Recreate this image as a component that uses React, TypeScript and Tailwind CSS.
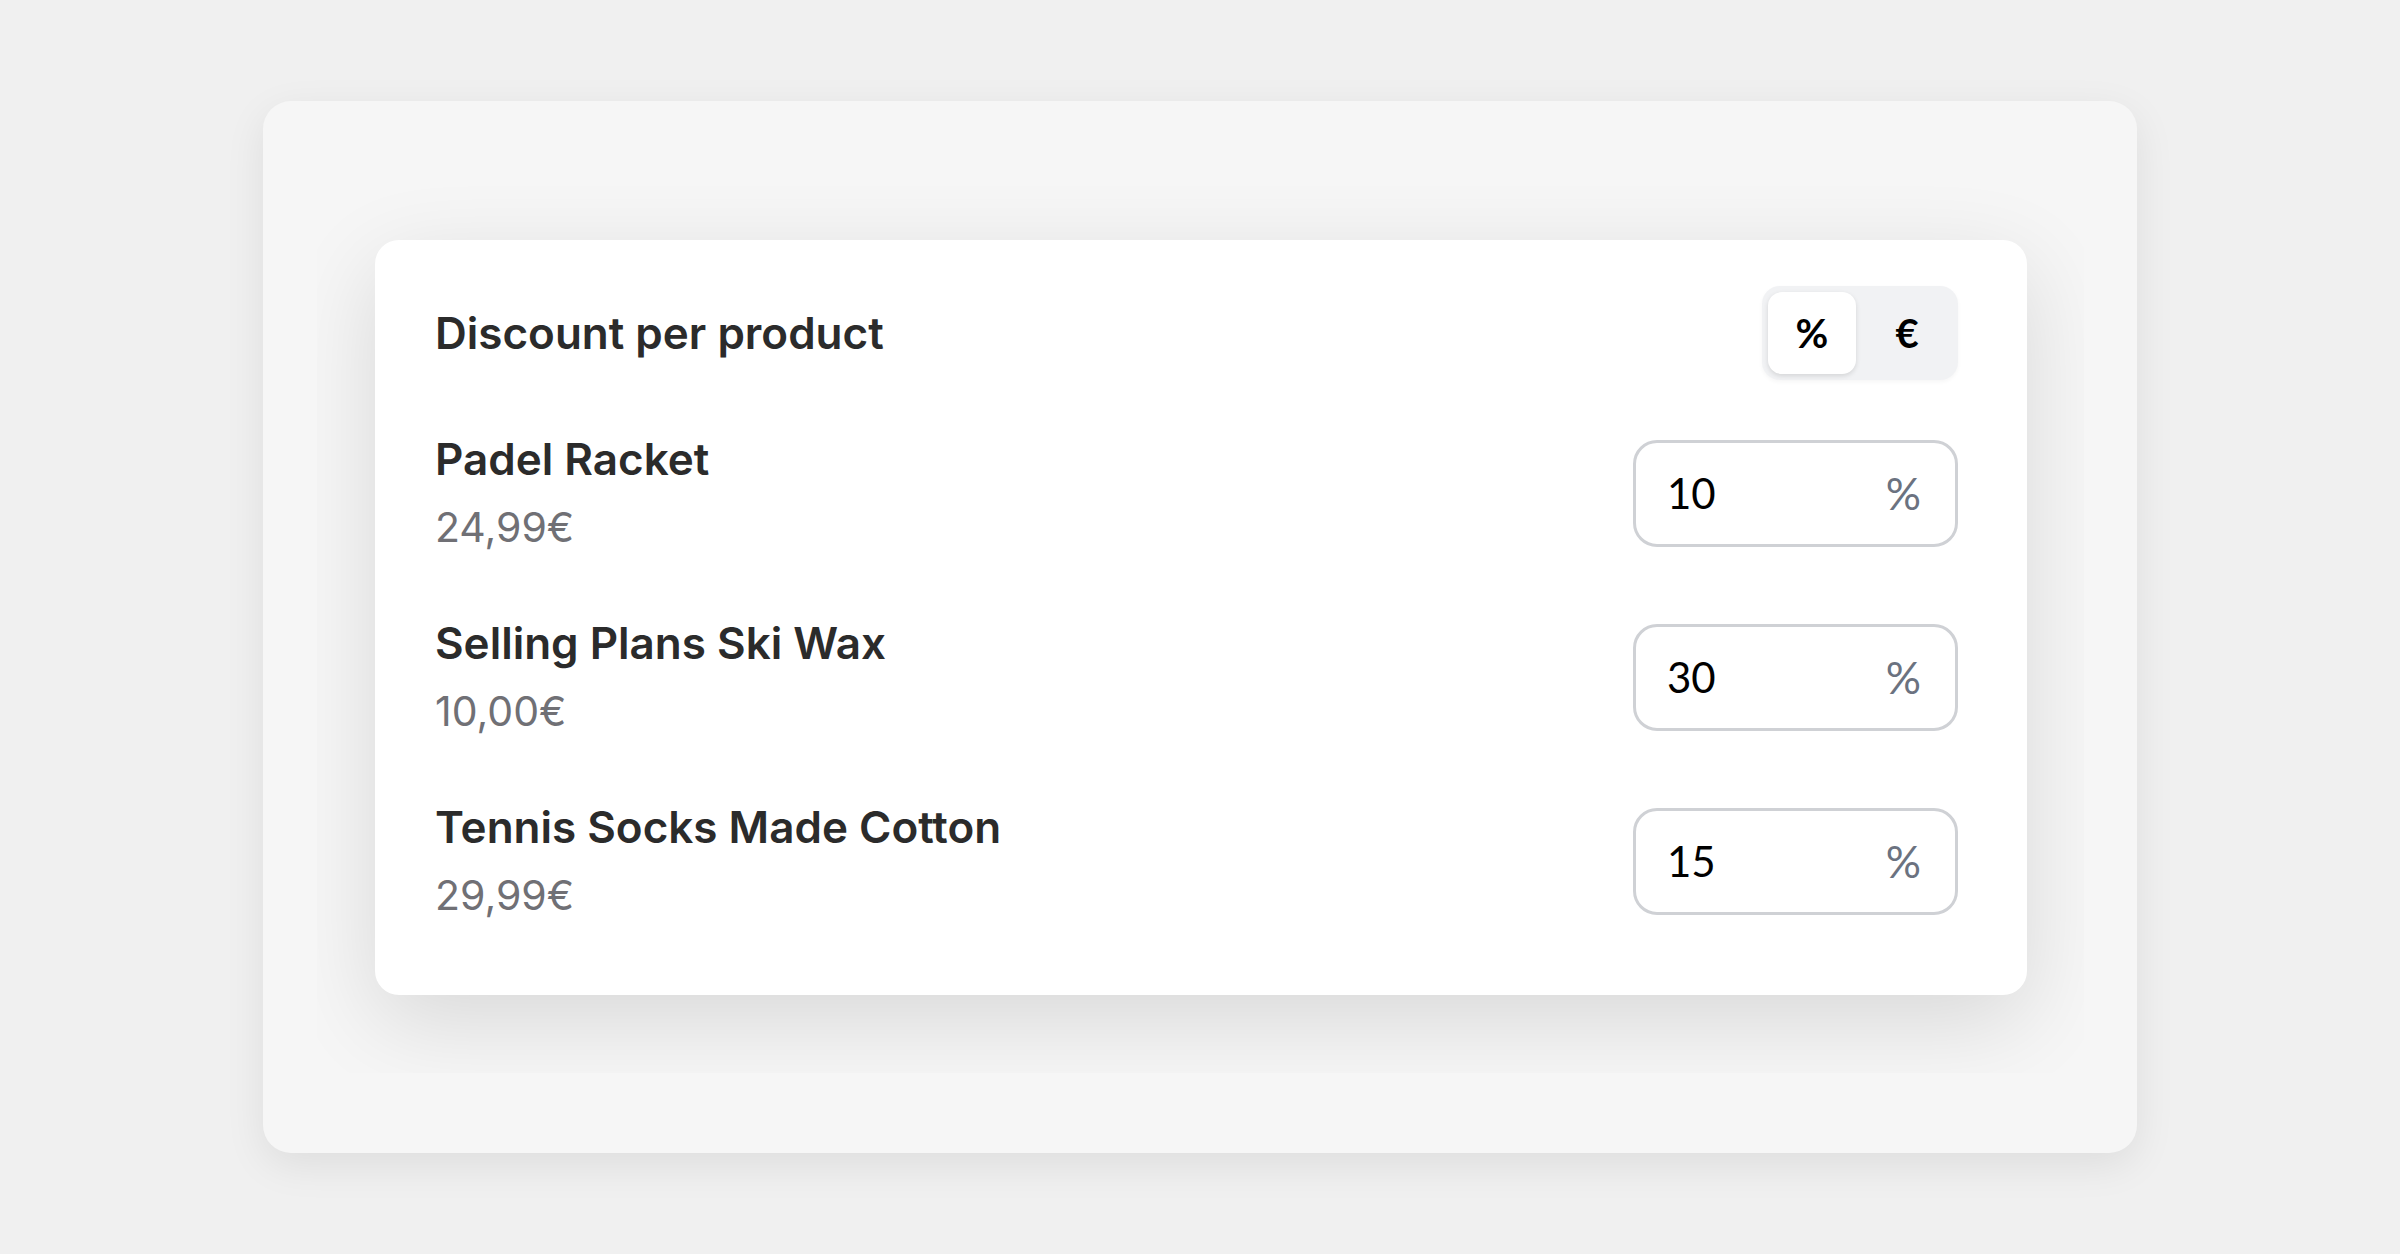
import React from "react";

const products = [
  { name: "Padel Racket", price: "24,99€", value: "10" },
  { name: "Selling Plans Ski Wax", price: "10,00€", value: "30" },
  { name: "Tennis Socks Made Cotton", price: "29,99€", value: "15" },
];

export default function App() {
  return (
    <div className="w-[2400px] h-[1254px] bg-[#f0f0f0] flex items-center justify-center font-['Inter',sans-serif]">
      <div className="w-[1874px] h-[1052px] bg-[#f6f6f6] rounded-[28px] shadow-[0_12px_40px_rgba(0,0,0,0.08)] pt-[80px] pl-[54px]">
        <div className="w-[1767px] h-[892px] overflow-hidden pl-[58px] pt-[59px]">
          <div className="w-[1652px] h-[755px] bg-white rounded-[24px] shadow-[0_26px_90px_rgba(0,0,0,0.12)] pt-[46px] pl-[60px] pr-[69px]">
            <div className="flex items-center justify-between h-[94px]">
              <div className="text-[44px] font-semibold text-[#2b2b2b]">Discount per product</div>
              <div className="w-[196px] h-[94px] bg-[#f1f2f4] rounded-[18px] p-[6px] flex items-center shadow-[0_2px_4px_rgba(0,0,0,0.04)]">
                <div className="w-[88px] h-[82px] bg-white rounded-[14px] shadow-[0_2px_5px_rgba(0,0,0,0.12)] flex items-center justify-center text-[40px] font-bold text-black font-['Lato',sans-serif]">%</div>
                <div className="flex-1 h-[82px] flex items-center justify-center pl-[6px] text-[40px] font-bold text-black font-['Lato',sans-serif]">€</div>
              </div>
            </div>
            <div className="mt-[49px] flex flex-col gap-[56px]">
              {products.map((p) => (
                <div key={p.name} className="flex items-center justify-between h-[128px]">
                  <div className="flex flex-col">
                    <div className="text-[44px] leading-[60px] font-semibold text-[#2b2b2b]">{p.name}</div>
                    <div className="text-[41px] leading-[60px] mt-[8px] text-[#707075]">{p.price}</div>
                  </div>
                  <div className="w-[325px] h-[107px] border-[3px] border-[#cfd1d5] rounded-[24px] flex items-center justify-between pl-[31px] pr-[34px] font-['Lato',sans-serif]">
                    <span className="text-[42px] text-black">{p.value}</span>
                    <span className="text-[44px] text-[#6b7280]">%</span>
                  </div>
                </div>
              ))}
            </div>
          </div>
        </div>
      </div>
    </div>
  );
}
